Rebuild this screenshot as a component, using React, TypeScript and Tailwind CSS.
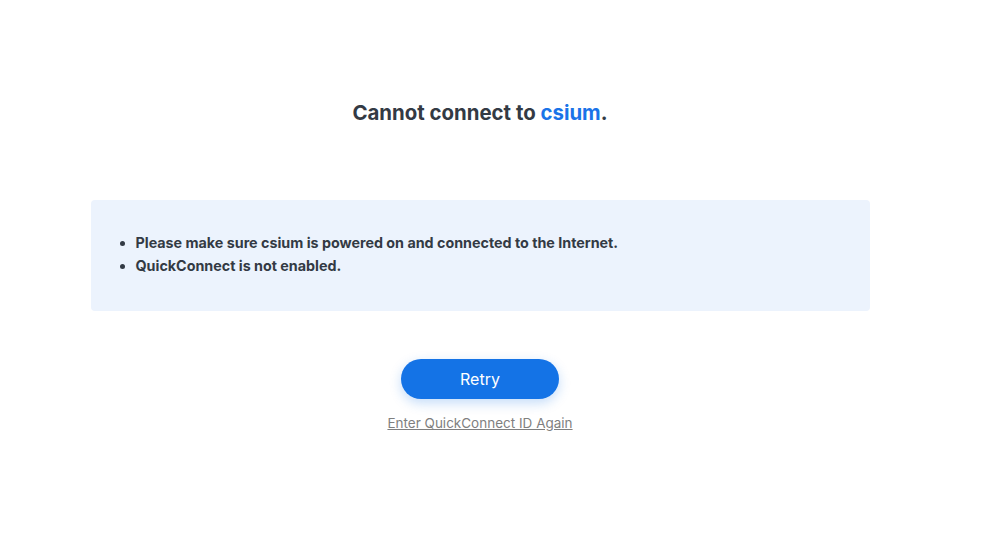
export default function App() {
  return (
    <main
      className="flex h-[553px] w-[960px] flex-col items-center bg-white text-[#333a44]"
      style={{ fontFamily: 'Inter, "Noto Sans", sans-serif' }}
    >
      <h1 className="mt-[100px] text-[20.4px] font-bold leading-[26px]">
        Cannot connect to <span className="text-[#1a73e8]">csium</span>.
      </h1>

      <div className="mt-[74px] w-[779px] rounded-[4px] bg-[#ecf3fd] px-[30px] pb-[34px] pt-[31px]">
        <ul className="list-disc pl-[15px] text-[14.3px] font-bold leading-[23px]">
          <li>Please make sure csium is powered on and connected to the Internet.</li>
          <li>QuickConnect is not enabled.</li>
        </ul>
      </div>

      <button
        type="button"
        className="mt-[48px] h-[40px] w-[158px] rounded-full bg-[#1473e6] text-[16px] text-white shadow-[0_4px_12px_rgba(20,115,230,0.25)]"
      >
        Retry
      </button>
      <a href="#" className="mt-[14px] text-[13.5px] leading-[20px] text-[#7f7f7f] underline">
        Enter QuickConnect ID Again
      </a>
    </main>
  )
}
